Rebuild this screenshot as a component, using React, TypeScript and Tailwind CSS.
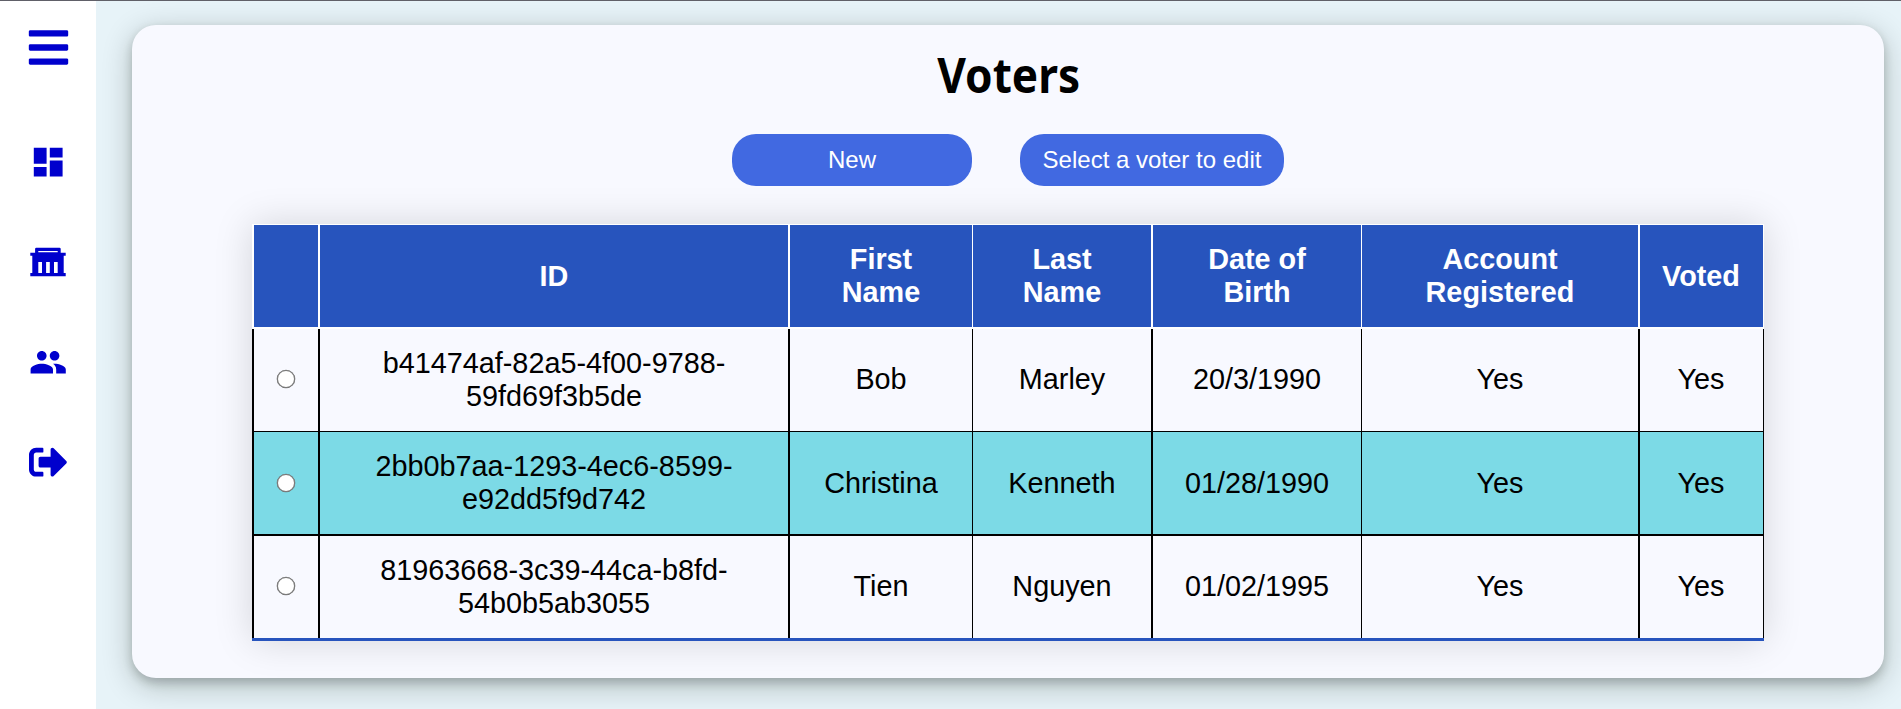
import { FaBars, FaSignOutAlt } from "react-icons/fa";
import { MdDashboard, MdPeople } from "react-icons/md";

const columns = ["", "ID", "First Name", "Last Name", "Date of Birth", "Account Registered", "Voted"];

const voters = [
  { id: "b41474af-82a5-4f00-9788-59fd69f3b5de", first: "Bob", last: "Marley", dob: "20/3/1990" },
  { id: "2bb0b7aa-1293-4ec6-8599-e92dd5f9d742", first: "Christina", last: "Kenneth", dob: "01/28/1990" },
  { id: "81963668-3c39-44ca-b8fd-54b0b5ab3055", first: "Tien", last: "Nguyen", dob: "01/02/1995" },
];

const grid = "grid grid-cols-[66px_470px_184px_179px_210px_277px_126px]";
const edges = [
  "border-l-2 px-5",
  "border-l-2 px-5",
  "border-l-2 px-5",
  "border-l px-5",
  "border-l-2 px-5",
  "border-l px-5",
  "border-l-2 border-r pl-5 pr-[21px]",
];
const rowStyles = [
  "h-[103px] border-b border-black bg-[#f8f9ff]",
  "h-[104px] border-b-2 border-black bg-[#7cdae6]",
  "h-[105px] border-b-3 border-[#2754bd] bg-[#f8f9ff]",
];

function BankIcon() {
  return (
    <svg viewBox="0 0 36 30" className="h-[30px] w-9" fill="currentColor" fillRule="evenodd">
      <path d="M6.300 0.700H29.500a1.200 1.200 0 0 1 1.200 1.200V5.700H35.700V8.700H33.700V26H35.700V29.300H0.300V26H2.300V8.700H0.300V5.700H5.100V1.900a1.200 1.200 0 0 1 1.200-1.200zM8.300 3.900V5.300H27.700V3.900zM8.300 15V26H12V15zM16.100 15V26H19.800V15zM24 15V26H27.700V15z" />
    </svg>
  );
}

export default function App() {
  return (
    <div className="flex h-[709px] w-full overflow-hidden border-t border-[#606068] bg-[#e7f3f8] font-['Liberation_Sans',Arial,sans-serif] text-black">
      <nav className="flex w-24 shrink-0 flex-col items-center bg-white text-[#0000cd]">
        <div className="flex h-[93px] items-center pl-px"><FaBars className="h-[45px] w-[45px]" /></div>
        <div className="mt-[18px] flex h-[100px] items-center"><MdDashboard size={38.4} /></div>
        <div className="flex h-[100px] items-center"><BankIcon /></div>
        <div className="flex h-[100px] items-center"><MdPeople size={38.4} /></div>
        <div className="flex h-[100px] items-center"><FaSignOutAlt size={38.4} /></div>
      </nav>
      <main className="ml-9 mt-6 h-[653px] w-[1752px] rounded-[24px] bg-[#f8f9ff] shadow-[0_4.8px_9.6px_rgba(0,0,0,0.18),0_7.2px_30px_rgba(0,20,10,0.24)]">
        <h1 className="flex h-[109px] items-center justify-center pb-2.5 pl-0.5 font-['Noto_Sans',sans-serif] text-5xl font-bold">
          <span className="scale-x-[0.92]">Voters</span>
        </h1>
        <div className="flex justify-center gap-12 text-2xl text-white">
          <button className="h-[52px] w-60 rounded-[24px] bg-[#4169e1]">New</button>
          <button className="h-[52px] w-[264px] rounded-[24px] bg-[#4169e1]">Select a voter to edit</button>
        </div>
        <div className="ml-[120px] mt-[38px] w-[1512px] text-center text-[28.8px] leading-[33px] shadow-[0_0_36px_rgba(0,0,0,0.15)]">
          <div className={`${grid} h-[105px] border-b-2 border-t border-white bg-[#2754bd] font-bold text-white`}>
            {columns.map((label, i) => (
              <div key={label} className={`flex items-center justify-center border-white ${edges[i]}`}>{label}</div>
            ))}
          </div>
          {voters.map((voter, row) => (
            <div key={voter.id} className={`${grid} ${rowStyles[row]}`}>
              {["", voter.id, voter.first, voter.last, voter.dob, "Yes", "Yes"].map((value, i) => (
                <div key={i} className={`flex items-center justify-center border-black ${edges[i]} ${i !== 1 && row !== 1 ? "pb-0.5" : ""}`}>
                  {i === 0 ? (
                    <input type="radio" name="voter" aria-label={voter.first} className="mr-px h-[18px] w-[18px] shrink-0 appearance-none rounded-full border border-[#767676] bg-white shadow-[0_0_0_0.3px_#767676]" />
                  ) : (
                    <span className={i === 1 ? "w-[360px]" : ""}>{value}</span>
                  )}
                </div>
              ))}
            </div>
          ))}
        </div>
      </main>
    </div>
  );
}
